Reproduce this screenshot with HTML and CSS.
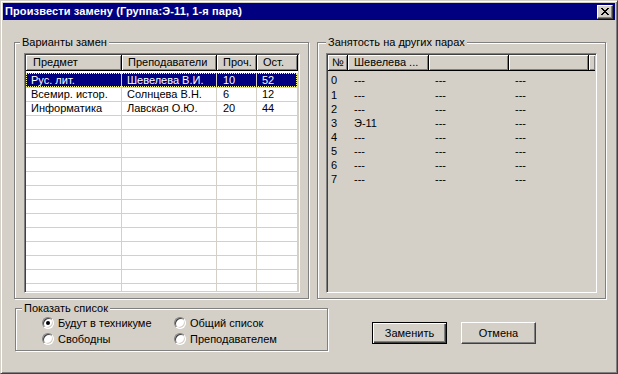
FILE: index.html
```html
<!DOCTYPE html>
<html>
<head>
<meta charset="utf-8">
<title>Произвести замену</title>
<link rel="stylesheet" href="styles.css">
</head>
<body>
<div class="window">
  <div class="titlebar">
    <span class="title">Произвести замену (Группа:Э-11, 1-я пара)</span>
    <span class="close"><svg width="8" height="7" viewBox="0 0 8 7" shape-rendering="crispEdges"><path d="M0 0h2v1H0z M6 0h2v1H6z M1 1h2v1H1z M5 1h2v1H5z M2 2h4v1H2z M3 3h2v1H3z M2 4h4v1H2z M1 5h2v1H1z M5 5h2v1H5z M0 6h2v1H0z M6 6h2v1H6z" fill="#000"/></svg></span>
  </div>

  <div class="row-top">
    <div class="group g-left">
      <div class="legend">Варианты замен</div>
      <div class="grid grid-left">
        <div class="ghead">
          <div class="hc l1">Предмет</div>
          <div class="hc l2">Преподаватели</div>
          <div class="hc l3">Проч.</div>
          <div class="hc l4">Ост.</div>
        </div>
        <div class="gbody">
          <div class="gr sel"><div class="gc l1">Рус. лит.</div><div class="gc l2">Шевелева В.И.</div><div class="gc l3">10</div><div class="gc l4">52</div></div>
          <div class="gr"><div class="gc l1">Всемир. истор.</div><div class="gc l2">Солнцева В.Н.</div><div class="gc l3">6</div><div class="gc l4">12</div></div>
          <div class="gr"><div class="gc l1">Информатика</div><div class="gc l2">Лавская О.Ю.</div><div class="gc l3">20</div><div class="gc l4">44</div></div>
          <div class="gr"><div class="gc l1"></div><div class="gc l2"></div><div class="gc l3"></div><div class="gc l4"></div></div>
          <div class="gr"><div class="gc l1"></div><div class="gc l2"></div><div class="gc l3"></div><div class="gc l4"></div></div>
          <div class="gr"><div class="gc l1"></div><div class="gc l2"></div><div class="gc l3"></div><div class="gc l4"></div></div>
          <div class="gr"><div class="gc l1"></div><div class="gc l2"></div><div class="gc l3"></div><div class="gc l4"></div></div>
          <div class="gr"><div class="gc l1"></div><div class="gc l2"></div><div class="gc l3"></div><div class="gc l4"></div></div>
          <div class="gr"><div class="gc l1"></div><div class="gc l2"></div><div class="gc l3"></div><div class="gc l4"></div></div>
          <div class="gr"><div class="gc l1"></div><div class="gc l2"></div><div class="gc l3"></div><div class="gc l4"></div></div>
          <div class="gr"><div class="gc l1"></div><div class="gc l2"></div><div class="gc l3"></div><div class="gc l4"></div></div>
          <div class="gr"><div class="gc l1"></div><div class="gc l2"></div><div class="gc l3"></div><div class="gc l4"></div></div>
          <div class="gr"><div class="gc l1"></div><div class="gc l2"></div><div class="gc l3"></div><div class="gc l4"></div></div>
          <div class="gr"><div class="gc l1"></div><div class="gc l2"></div><div class="gc l3"></div><div class="gc l4"></div></div>
          <div class="gr"><div class="gc l1"></div><div class="gc l2"></div><div class="gc l3"></div><div class="gc l4"></div></div>
          <div class="gr"><div class="gc l1"></div><div class="gc l2"></div><div class="gc l3"></div><div class="gc l4"></div></div>
          <div class="gr"><div class="gc l1"></div><div class="gc l2"></div><div class="gc l3"></div><div class="gc l4"></div></div>
        </div>
      </div>
    </div>

    <div class="group g-right">
      <div class="legend legend-r">Занятость на других парах</div>
      <div class="grid grid-right">
        <div class="ghead">
          <div class="hc r1">№</div>
          <div class="hc r2">Шевелева ...</div>
          <div class="hc r3"></div>
          <div class="hc r4"></div>
          <div class="hc r5"></div>
        </div>
        <div class="gbody">
          <div class="rr"><div class="rc r1">0</div><div class="rc r2">---</div><div class="rc r3">---</div><div class="rc r4">---</div></div>
          <div class="rr"><div class="rc r1">1</div><div class="rc r2">---</div><div class="rc r3">---</div><div class="rc r4">---</div></div>
          <div class="rr"><div class="rc r1">2</div><div class="rc r2">---</div><div class="rc r3">---</div><div class="rc r4">---</div></div>
          <div class="rr"><div class="rc r1">3</div><div class="rc r2">Э-11</div><div class="rc r3">---</div><div class="rc r4">---</div></div>
          <div class="rr"><div class="rc r1">4</div><div class="rc r2">---</div><div class="rc r3">---</div><div class="rc r4">---</div></div>
          <div class="rr"><div class="rc r1">5</div><div class="rc r2">---</div><div class="rc r3">---</div><div class="rc r4">---</div></div>
          <div class="rr"><div class="rc r1">6</div><div class="rc r2">---</div><div class="rc r3">---</div><div class="rc r4">---</div></div>
          <div class="rr"><div class="rc r1">7</div><div class="rc r2">---</div><div class="rc r3">---</div><div class="rc r4">---</div></div>
        </div>
      </div>
    </div>
  </div>

  <div class="row-bottom">
    <div class="group g-radio">
      <div class="legend legend-b">Показать список</div>
      <div class="opts">
        <div class="opt"><span class="radio checked"></span><span>Будут в техникуме</span></div>
        <div class="opt"><span class="radio"></span><span>Общий список</span></div>
        <div class="opt"><span class="radio"></span><span>Свободны</span></div>
        <div class="opt"><span class="radio"></span><span>Преподавателем</span></div>
      </div>
    </div>
    <div class="buttons">
      <div class="btn default">Заменить</div>
      <div class="btn">Отмена</div>
    </div>
  </div>
</div>
</body>
</html>
```

FILE: styles.css
```css
html, body {
  margin: 0;
  padding: 0;
  background: #d4d0c8;
}
body {
  font-family: "Liberation Sans", Arial, sans-serif;
  font-size: 11px;
  line-height: 13px;
  color: #000;
}
.window {
  width: 618px;
  height: 374px;
  box-sizing: border-box;
  background: #d4d0c8;
  border: 1px solid;
  border-color: #d4d0c8 #404040 #404040 #d4d0c8;
  box-shadow: inset 1px 1px 0 #fff, inset -1px -1px 0 #808080;
  padding: 2px;
  overflow: hidden;
}
.titlebar {
  height: 17px;
  background: #000080;
  display: flex;
  align-items: center;
  justify-content: space-between;
  padding: 0 2px;
  color: #fff;
  font-weight: bold;
}
.title {
  white-space: nowrap;
  line-height: 17px;
  letter-spacing: 0.12px;
}
.close {
  width: 16px;
  height: 14px;
  box-sizing: border-box;
  background: #d4d0c8;
  border: 1px solid;
  border-color: #fff #404040 #404040 #fff;
  box-shadow: inset -1px -1px 0 #808080;
  display: flex;
  align-items: center;
  justify-content: center;
}
.close svg { display: block; }

.row-top {
  display: flex;
  gap: 8px;
  margin-top: 22px;
  padding-left: 11px;
}
.group {
  box-sizing: border-box;
  border: 1px solid #808080;
  box-shadow: 1px 1px 0 #fff, inset 1px 1px 0 #fff;
}
.g-left { width: 295px; height: 257px; }
.g-right { width: 289px; height: 257px; }
.legend {
  width: fit-content;
  height: 13px;
  margin: -7px 0 0 5px;
  padding: 0 2px;
  background: #d4d0c8;
  white-space: nowrap;
}
.legend-r { margin-left: 8px; }
.legend-b { margin-left: 6px; }

.grid {
  box-sizing: border-box;
  border: 1px solid;
  border-color: #808080 #fff #fff #808080;
  box-shadow: inset 1px 1px 0 #404040, inset -1px -1px 0 #d4d0c8;
  padding: 1px;
  overflow: hidden;
}
.grid-left {
  width: 276px;
  height: 240px;
  margin: 4px 0 0 9px;
  background: #fff;
}
.grid-right {
  width: 271px;
  height: 240px;
  margin: 4px 0 0 8px;
  background: #d4d0c8;
}
.ghead {
  display: flex;
  height: 16px;
}
.hc {
  box-sizing: border-box;
  height: 16px;
  flex: none;
  background: #d4d0c8;
  border-right: 1px solid #000;
  border-bottom: 1px solid #000;
  box-shadow: inset 1px 1px 0 #fff, inset -1px -1px 0 #808080;
  padding-left: 6px;
  line-height: 15px;
  white-space: nowrap;
  overflow: hidden;
}
.gbody {
  padding-top: 2px;
}
.gr {
  display: flex;
  height: 14px;
}
.gr:first-child { height: 15px; }
.gc {
  box-sizing: border-box;
  flex: none;
  height: 100%;
  border-right: 1px solid #d4d0c8;
  border-bottom: 1px solid #d4d0c8;
  padding-left: 5px;
  line-height: 13px;
  white-space: nowrap;
  overflow: hidden;
}
.gr:first-child .gc { line-height: 14px; }
.l1 { width: 96px; }
.l2 { width: 95px; }
.l3 { width: 40px; }
.l4 { width: 41px; }
.hc.l1 { padding-left: 7px; }
.gc.l3 { padding-left: 6px; }

.sel { position: relative; }
.sel .gc {
  background: #000080;
  color: #fff;
}
.sel::after {
  content: "";
  position: absolute;
  left: 0;
  top: 0;
  right: 1px;
  bottom: 1px;
  border: 1px dotted #ffff80;
}

.r1 { width: 20px; }
.r2 { width: 81px; }
.r3 { width: 80px; }
.r4 { width: 80px; }
.r5 { width: 6px; border-right: none; padding: 0; }
.hc.r1 { padding-left: 4px; }
.rr {
  display: flex;
  height: 14px;
}
.rr:first-child { height: 15px; }
.rc {
  flex: none;
  box-sizing: border-box;
  padding-left: 6px;
  line-height: 14px;
  white-space: nowrap;
}
.rc.r1 { padding-left: 3px; }
.rr:first-child .rc { line-height: 15px; }

.row-bottom {
  display: flex;
  align-items: flex-start;
  margin-top: 9px;
  padding-left: 12px;
}
.g-radio { width: 313px; height: 43px; }
.opts {
  display: grid;
  grid-template-columns: 132px 132px;
  padding-left: 26px;
}
.opt {
  display: flex;
  align-items: center;
  gap: 4px;
  height: 16px;
  white-space: nowrap;
}
.radio {
  position: relative;
  width: 12px;
  height: 12px;
  flex: none;
  box-sizing: border-box;
  border-radius: 50%;
  background: #fff;
  border: 1px solid;
  border-color: #808080 #fff #fff #808080;
  box-shadow: inset 1px 1px 0 #404040, inset -1px -1px 0 #d4d0c8;
}
.radio.checked::after {
  content: "";
  position: absolute;
  left: 3px;
  top: 3px;
  width: 4px;
  height: 4px;
  border-radius: 50%;
  background: #000;
}

.buttons {
  display: flex;
  gap: 14px;
  margin-left: 44px;
  margin-top: 14px;
}
.btn {
  width: 75px;
  height: 22px;
  box-sizing: border-box;
  display: flex;
  align-items: center;
  justify-content: center;
  background: #d4d0c8;
  border: 1px solid;
  border-color: #fff #404040 #404040 #fff;
  box-shadow: inset -1px -1px 0 #808080;
}
.btn.default {
  border-color: #000;
  box-shadow: inset 1px 1px 0 #fff, inset -1px -1px 0 #404040, inset -2px -2px 0 #808080;
}
```
